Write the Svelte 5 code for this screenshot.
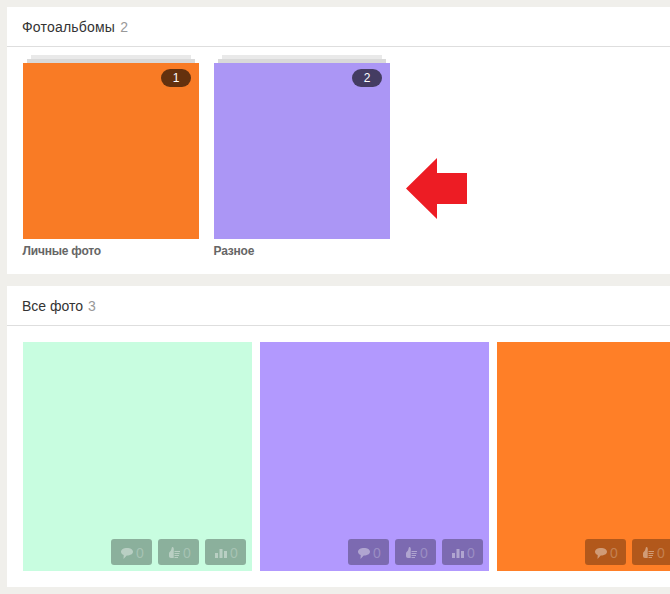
<script>
  const albums = [
    { title: 'Личные фото', count: 1, color: '#f97b25' },
    { title: 'Разное', count: 2, color: '#ab96f5' }
  ];

  const photos = [
    { color: '#c8fde0' },
    { color: '#b299fe' },
    { color: '#ff7f27' }
  ];
</script>

<div class="page">
  <section class="card albums-card">
    <h2 class="card-title wide">Фотоальбомы <span class="count">2</span></h2>
    <div class="albums">
      {#each albums as album}
        <div class="album">
          <div class="stack stack-back"></div>
          <div class="stack stack-mid"></div>
          <div class="cover" style="background-color: {album.color}">
            <span class="badge">{album.count}</span>
          </div>
          <div class="album-title">{album.title}</div>
        </div>
      {/each}
      <svg class="arrow" width="61" height="61" viewBox="0 0 61 61">
        <polygon points="0,30.5 31,0 31,15 61,15 61,46 31,46 31,61" fill="#ed1c24"></polygon>
      </svg>
    </div>
  </section>

  <section class="card">
    <h2 class="card-title">Все фото <span class="count">3</span></h2>
    <div class="photos">
      {#each photos as photo}
        <div class="photo" style="background-color: {photo.color}">
          <div class="actions">
            <span class="action">
              <svg width="12" height="12" viewBox="0 0 12 12">
                <path d="M6 1C2.700 1 0 2.500 0 4.700c0 1.500 1.100 2.600 2.700 3.200L2.500 12 5.700 8.400H6c3.300 0 6-1.500 6-3.700S9.300 1 6 1z" fill="#fff"></path>
              </svg>
              <span class="num">0</span>
            </span>
            <span class="action">
              <svg width="12" height="12" viewBox="0 0 12 12">
                <path d="M1 6.500C1 5 2.500 4.500 3.200 3 3.700 2 3.500 0 4.500 0 5.700 0 6 1.800 5.700 4v7H3C1.800 11 1 10.200 1 9z" fill="#fff"></path>
                <path d="M6.500 4.500H12M6.500 6.500H11.500M6.500 8.500H11M6.500 10.500H10" stroke="#fff" stroke-width="1" fill="none"></path>
              </svg>
              <span class="num">0</span>
            </span>
            <span class="action">
              <svg width="12" height="12" viewBox="0 0 12 12">
                <path d="M0 6h3v5H0zM4.500 2h3v9h-3zM9 4h3v7H9z" fill="#fff"></path>
              </svg>
              <span class="num">0</span>
            </span>
          </div>
        </div>
      {/each}
    </div>
  </section>
</div>

<style>
  :global(body) {
    margin: 0;
    background: #f0efeb;
    overflow: hidden;
  }

  .page {
    width: 670px;
    height: 594px;
    box-sizing: border-box;
    padding: 7px 0 0 7px;
    overflow: hidden;
    font-family: "Liberation Sans", Arial, sans-serif;
  }

  .card {
    background: #fff;
    margin-bottom: 12px;
    height: 301px;
  }

  .albums-card {
    height: 267px;
  }

  .card-title {
    height: 40px;
    box-sizing: border-box;
    margin: 0;
    padding-left: 15px;
    border-bottom: 1px solid #dedede;
    font-size: 14px;
    font-weight: normal;
    line-height: 40px;
    color: #333;
  }

  .card-title.wide {
    letter-spacing: 0.2px;
  }

  .count {
    margin-left: 1px;
    color: #999;
  }

  .albums {
    position: relative;
    display: flex;
    gap: 15px;
    padding: 8px 0 0 16px;
  }

  .album {
    width: 176px;
  }

  .stack {
    height: 4px;
  }

  .stack-back {
    margin: 0 8px;
    background: #e9e9e9;
  }

  .stack-mid {
    margin: 0 4px;
    background: #d9d9d9;
  }

  .cover {
    position: relative;
    height: 176px;
  }

  .badge {
    position: absolute;
    top: 6px;
    right: 8px;
    width: 30px;
    height: 18px;
    border-radius: 9px;
    background: rgba(0, 0, 0, 0.6);
    color: #fff;
    font-size: 12px;
    line-height: 18px;
    text-align: center;
  }

  .album-title {
    margin-top: 5px;
    margin-left: -0.5px;
    font-size: 12px;
    font-weight: bold;
    line-height: 15px;
    letter-spacing: -0.2px;
    color: #666;
  }

  .arrow {
    position: absolute;
    left: 399px;
    top: 111px;
  }

  .photos {
    display: flex;
    gap: 8px;
    padding: 16px 0 0 16px;
  }

  .photo {
    position: relative;
    flex: 0 0 229px;
    height: 229px;
  }

  .actions {
    position: absolute;
    right: 6px;
    bottom: 6px;
    display: flex;
    gap: 6px;
  }

  .action {
    display: flex;
    align-items: center;
    gap: 3px;
    box-sizing: border-box;
    width: 41px;
    height: 26px;
    padding: 2px 0 0 10px;
    border-radius: 3px;
    background: rgba(0, 0, 0, 0.3);
  }

  .action svg {
    opacity: 0.4;
  }

  .num {
    color: rgba(255, 255, 255, 0.25);
    font-size: 14px;
    line-height: 16px;
  }
</style>
